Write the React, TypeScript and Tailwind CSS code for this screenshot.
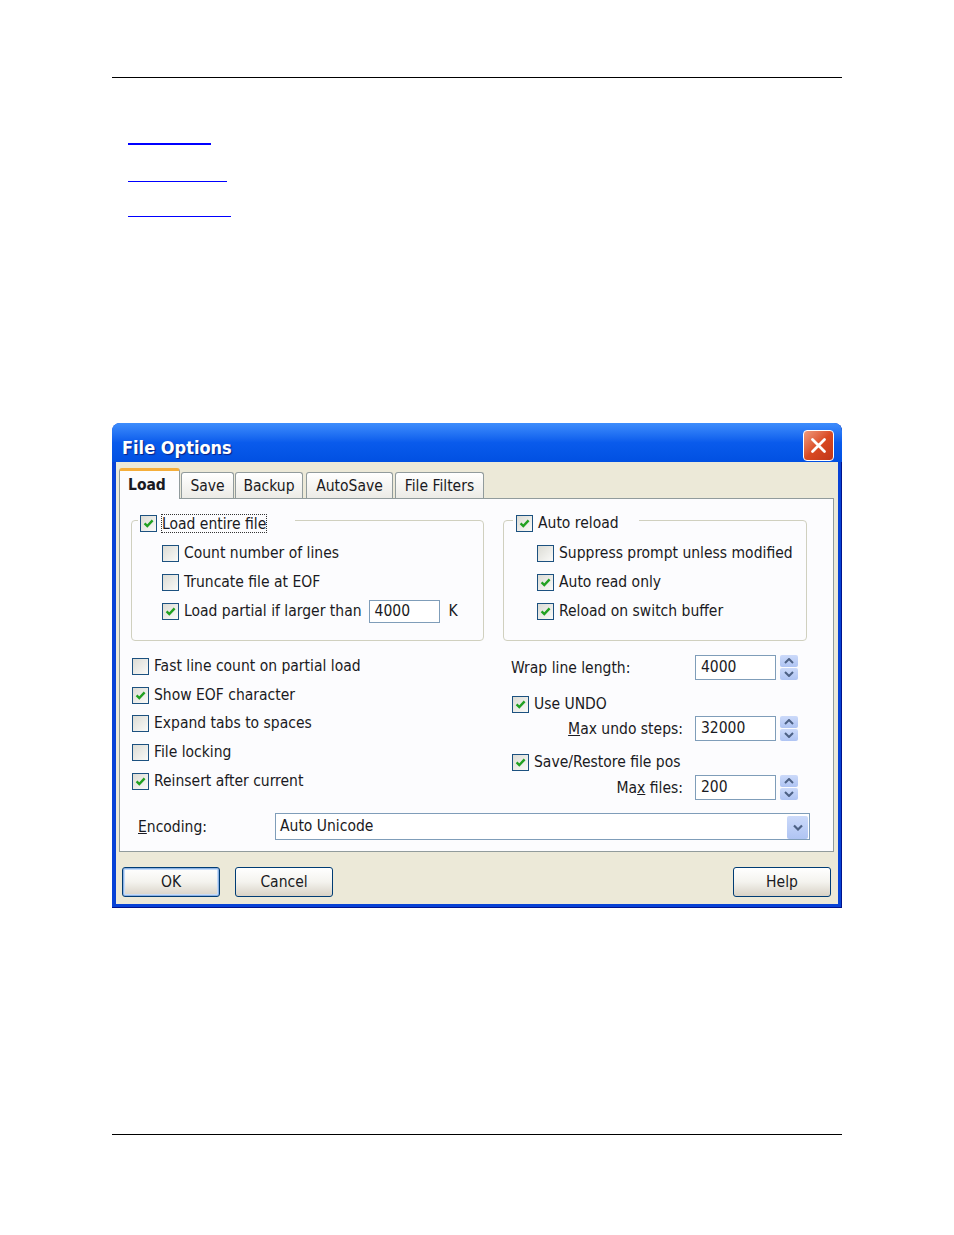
import React from "react";

// XP-style checkbox square
function Box({ on }: { on?: boolean }) {
  return (
    <span className="flex h-[17px] w-[17px] shrink-0 items-center justify-center border border-[#1C5180] bg-linear-to-br from-[#DCDCD5] to-[#FAFAF8]">
      {on && (
        <svg width="11" height="11" viewBox="0 0 11 11">
          <path d="M1.6 5.4 L4.3 8.1 L9.6 2.4" fill="none" stroke="#21A121" strokeWidth="2.4" />
        </svg>
      )}
    </span>
  );
}

function Check({ on, label, className = "" }: { on?: boolean; label: React.ReactNode; className?: string }) {
  return (
    <div className={`flex items-center gap-[5px] ${className}`}>
      <Box on={on} />
      <span className="whitespace-nowrap">{label}</span>
    </div>
  );
}

function Field({ value, w }: { value: string; w: string }) {
  return (
    <div className={`flex h-[25px] items-center border border-[#7F9DB9] bg-white pl-[5px] ${w}`}>
      {value}
    </div>
  );
}

function Arrow({ up }: { up?: boolean }) {
  return (
    <svg width="10" height="6" viewBox="0 0 10 6">
      <path d={up ? "M1 5 L5 1 L9 5" : "M1 1 L5 5 L9 1"} fill="none" stroke="#4D6185" strokeWidth="2" />
    </svg>
  );
}

function Spin() {
  return (
    <div className="ml-[4px] flex h-[25px] w-[18px] flex-col gap-px">
      <div className="flex h-[12px] items-center justify-center rounded-[2px] bg-linear-to-b from-[#CCDAFA] to-[#AFC4F3]">
        <Arrow up />
      </div>
      <div className="flex h-[12px] items-center justify-center rounded-[2px] bg-linear-to-b from-[#CCDAFA] to-[#AFC4F3]">
        <Arrow />
      </div>
    </div>
  );
}

function Btn({ label, def, className = "" }: { label: string; def?: boolean; className?: string }) {
  return (
    <div
      className={`flex h-[30px] w-[98px] items-center justify-center rounded-[3px] border border-[#003C74] bg-linear-to-b from-[#FFFFFF] via-[#F4F3EE] to-[#D8D2C6] pt-px ${
        def ? "shadow-[inset_0_0_0_1px_#8DB2E3,inset_0_0_0_2px_#C6DCF8]" : ""
      } ${className}`}
    >
      {label}
    </div>
  );
}

function Tab({ label, w, className = "" }: { label: string; w: string; className?: string }) {
  return (
    <div
      className={`flex h-[26px] items-center justify-center rounded-t-[3px] border border-b-0 border-[#919B9C] bg-linear-to-b from-[#FFFFFF] to-[#ECEBE6] pt-[2px] ${w} ${className}`}
    >
      {label}
    </div>
  );
}

function FileOptions() {
  return (
    <div className="ml-[112px] mt-[206px] flex h-[485px] w-[730px] flex-col rounded-t-[8px] bg-[#0842D6] shadow-[inset_-1px_-1px_0_#00138C]">
      {/* Title bar */}
      <div className="flex h-[39px] items-center justify-between rounded-t-[8px] bg-linear-to-b from-[#3E8DFC] via-[#0A5BEC] to-[#0150E2] pl-[10px] pr-[8px] pt-[6px]">
        <span className="pt-[3px] text-[18px] font-bold text-white [text-shadow:1px_1px_1px_#0A1F80]">File Options</span>
        <div className="flex h-[31px] w-[31px] items-center justify-center rounded-[4px] border border-white bg-linear-to-br from-[#EE9A7C] via-[#DA4A22] to-[#C0361A]">
          <svg width="17" height="17" viewBox="0 0 17 17">
            <path d="M2.5 2.5 L14.5 14.5 M14.5 2.5 L2.5 14.5" stroke="white" strokeWidth="2.8" strokeLinecap="round" />
          </svg>
        </div>
      </div>

      {/* Client area */}
      <div className="mx-[4px] flex h-[442px] flex-col bg-[#ECE9D8]">
        {/* Tabs */}
        <div className="mt-[6px] flex h-[30px] items-end pl-[3px]">
          <div className="relative z-10 -mb-px flex h-[31px] w-[61px] items-center rounded-t-[3px] border border-b-0 border-t-[3px] border-[#919B9C] border-t-[#F5AE3A] bg-[#FCFCFE] pl-[8px] pt-[2px] font-bold">
            Load
          </div>
          <Tab label="Save" w="w-[53px]" className="ml-px" />
          <Tab label="Backup" w="w-[68px]" className="ml-px" />
          <Tab label="AutoSave" w="w-[87px]" className="ml-[3px]" />
          <Tab label="File Filters" w="w-[89px]" className="ml-[2px]" />
        </div>

        {/* Tab pane */}
        <div className="ml-[3px] h-[354px] w-[715px] border border-[#919B9C] bg-[#FCFCFE]">
          <div className="flex gap-[19px] pl-[11px] pt-[9px]">
            <fieldset className="w-[353px] rounded-[4px] border border-[#D0D0BF] pb-[14px] pl-[6px]">
              <legend className="w-[157px] px-[2px] pt-[6px]">
                <div className="flex h-[18px] items-center">
                  <Box on />
                  <span className="ml-[4px] border border-dotted border-[#333] pt-px leading-[16px]">Load entire file</span>
                </div>
              </legend>
              <div className="pl-[24px] pt-[7px]">
                <Check label="Count number of lines" className="h-[29px]" />
                <Check label="Truncate file at EOF" className="h-[29px]" />
                <div className="flex h-[29px] items-center">
                  <Check on label="Load partial if larger than" />
                  <div className="ml-[7px] flex h-[23px] w-[71px] items-center border border-[#7F9DB9] bg-white pl-[5px]">4000</div>
                  <span className="ml-[9px]">K</span>
                </div>
              </div>
            </fieldset>

            <fieldset className="w-[304px] rounded-[4px] border border-[#D0D0BF] pb-[14px] pl-[9px]">
              <legend className="w-[126px] pl-[3px] pt-[6px]">
                <div className="flex h-[18px] items-center pt-px">
                  <Check on label="Auto reload" />
                </div>
              </legend>
              <div className="pl-[24px] pt-[7px]">
                <Check label="Suppress prompt unless modified" className="h-[29px]" />
                <Check on label="Auto read only" className="h-[29px]" />
                <Check on label="Reload on switch buffer" className="h-[29px]" />
              </div>
            </fieldset>
          </div>

          <div className="flex">
            <div className="w-[391px] pl-[12px] pt-[11px]">
              <Check label="Fast line count on partial load" className="h-[28.75px]" />
              <Check on label="Show EOF character" className="h-[28.75px]" />
              <Check label="Expand tabs to spaces" className="h-[28.75px]" />
              <Check label="File locking" className="h-[28.75px]" />
              <Check on label="Reinsert after current" className="h-[28.75px]" />
            </div>
            <div className="pt-[14px]">
              <div className="flex h-[25px] items-center">
                <span className="w-[184px] pt-[2px]">Wrap line length:</span>
                <Field value="4000" w="w-[81px]" />
                <Spin />
              </div>
              <Check on label="Use UNDO" className="mt-[13px] h-[23px] pl-px" />
              <div className="flex h-[25px] items-center">
                <span className="w-[184px] pr-[12px] pt-[2px] text-right">
                  <span className="underline">M</span>ax undo steps:
                </span>
                <Field value="32000" w="w-[81px]" />
                <Spin />
              </div>
              <Check on label="Save/Restore file pos" className="mt-[10px] h-[23px] pl-px" />
              <div className="mt-px flex h-[25px] items-center">
                <span className="w-[184px] pr-[12px] pt-[2px] text-right">
                  Ma<span className="underline">x</span> files:
                </span>
                <Field value="200" w="w-[81px]" />
                <Spin />
              </div>
            </div>
          </div>

          <div className="mt-[13px] flex h-[27px] items-center pl-[18px]">
            <span className="w-[137px] pt-[2px]">
              <span className="underline">E</span>ncoding:
            </span>
            <div className="flex h-[27px] w-[535px] items-center border border-[#7F9DB9] bg-white pl-[4px] pt-px">
              Auto Unicode
              <div className="ml-auto mr-px flex h-[23px] w-[21px] items-center justify-center rounded-[2px] bg-linear-to-b from-[#CCDAFA] to-[#AFC4F3]">
                <svg width="10" height="7" viewBox="0 0 10 7">
                  <path d="M1 1.5 L5 5.5 L9 1.5" fill="none" stroke="#4D6185" strokeWidth="2.2" />
                </svg>
              </div>
            </div>
          </div>
        </div>

        {/* Buttons */}
        <div className="mt-[15px] flex pl-[6px] pr-[7px]">
          <Btn label="OK" def />
          <Btn label="Cancel" className="ml-[15px]" />
          <Btn label="Help" className="ml-auto" />
        </div>
      </div>
    </div>
  );
}

export default function App() {
  return (
    <div className="h-[1235px] w-[954px] overflow-hidden bg-white pt-[77px] font-['DejaVu_Sans_Condensed','DejaVu_Sans',sans-serif] text-[15.5px] text-[#1A1A22]">
      <div className="ml-[112px] h-px w-[730px] bg-black" />
      <div className="ml-[128px] flex flex-col items-start">
        <a className="mt-[65px] block h-[2px] w-[83px] bg-[#0000FF]" />
        <a className="mt-[36px] block h-px w-[99px] bg-[#0000FF]" />
        <a className="mt-[34px] block h-px w-[103px] bg-[#0000FF]" />
      </div>
      <FileOptions />
      <div className="ml-[112px] mt-[226px] h-px w-[730px] bg-black" />
    </div>
  );
}
